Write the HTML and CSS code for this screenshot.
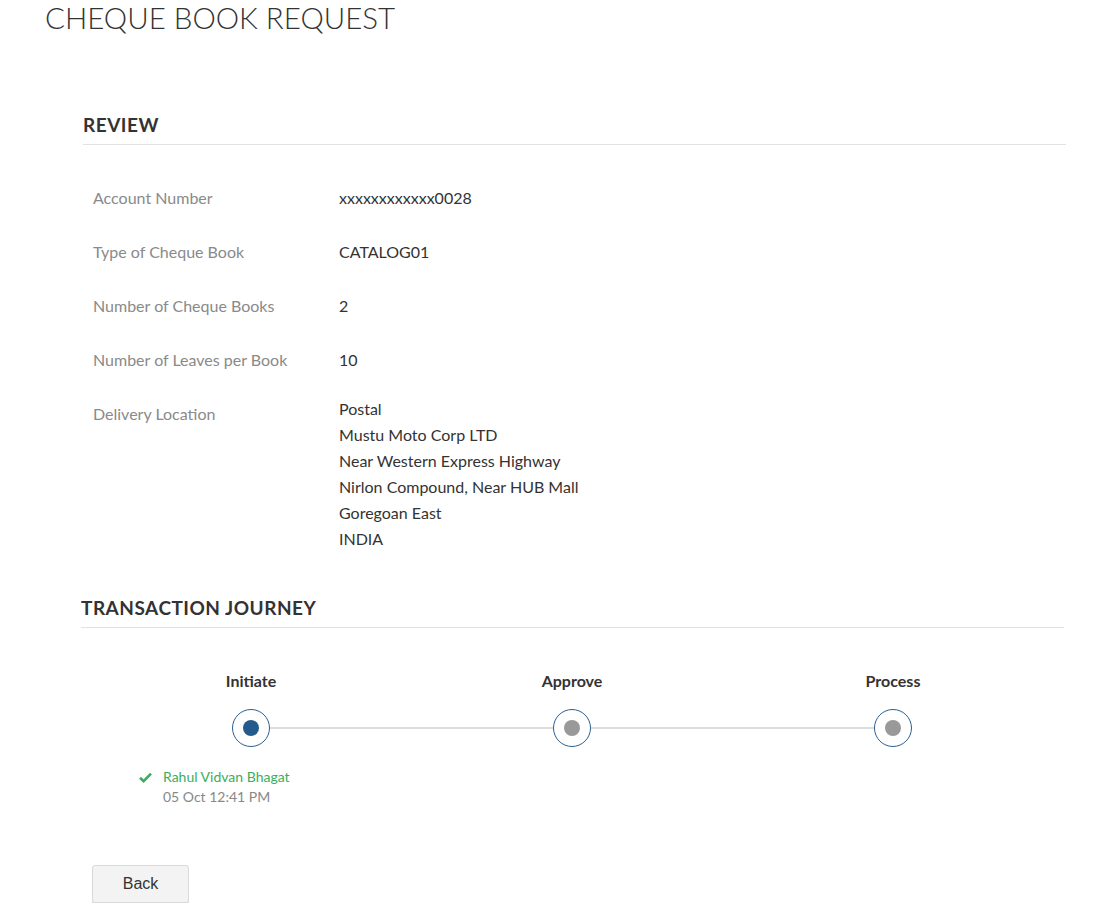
FILE: index.html
```html
<!DOCTYPE html>
<html lang="en">
<head>
<meta charset="utf-8">
<title>Cheque Book Request</title>
<link rel="stylesheet" href="styles.css">
</head>
<body>
<h1 class="page-title">CHEQUE BOOK REQUEST</h1>

<section class="review">
  <h2 class="section-heading">REVIEW</h2>
  <div class="rows">
    <div class="row"><div class="label">Account Number</div><div class="value">xxxxxxxxxxxx0028</div></div>
    <div class="row"><div class="label">Type of Cheque Book</div><div class="value">CATALOG01</div></div>
    <div class="row"><div class="label">Number of Cheque Books</div><div class="value">2</div></div>
    <div class="row"><div class="label">Number of Leaves per Book</div><div class="value">10</div></div>
    <div class="row"><div class="label">Delivery Location</div>
      <div class="value address">
        <div>Postal</div>
        <div>Mustu Moto Corp LTD</div>
        <div>Near Western Express Highway</div>
        <div>Nirlon Compound, Near HUB Mall</div>
        <div>Goregoan East</div>
        <div>INDIA</div>
      </div>
    </div>
  </div>
</section>

<section class="journey">
  <h2 class="section-heading">TRANSACTION JOURNEY</h2>
  <div class="step-labels">
    <div class="step-label">Initiate</div>
    <div class="step-label">Approve</div>
    <div class="step-label">Process</div>
  </div>
  <div class="track">
    <div class="node"><span class="dot dot-active"></span></div>
    <div class="connector"></div>
    <div class="node"><span class="dot"></span></div>
    <div class="connector"></div>
    <div class="node"><span class="dot"></span></div>
  </div>
  <div class="actor">
    <svg class="check" width="13" height="11" viewBox="0 0 13 11"><path d="M1 5.8 L4.6 9.2 L12 1.6" fill="none" stroke="#3aae5b" stroke-width="2.6"/></svg>
    <div class="actor-text">
      <div class="actor-name">Rahul Vidvan Bhagat</div>
      <div class="actor-date">05 Oct 12:41 PM</div>
    </div>
  </div>
</section>

<div class="actions">
  <button class="btn" type="button">Back</button>
</div>
</body>
</html>
```

FILE: styles.css
```css
html, body {
  margin: 0;
  padding: 0;
  background: #fff;
}
body {
  font-family: Lato, "Open Sans", sans-serif;
  color: #333;
}
.page-title {
  margin: 0;
  padding-left: 45px;
  font-size: 29.5px;
  line-height: 36px;
  font-weight: 300;
  letter-spacing: 0;
  color: #333;
}
.section-heading {
  margin: 0;
  font-size: 19px;
  line-height: 24px;
  font-weight: 700;
  letter-spacing: 0.5px;
  color: #333;
  padding-bottom: 7px;
  border-bottom: 1px solid #e2e2e2;
}
.review {
  margin: 77px 48px 0 83px;
}
.rows {
  margin-top: 26px;
}
.row {
  display: flex;
  padding: 14px 0;
  font-size: 16px;
  line-height: 26px;
}
.label {
  width: 246px;
  padding-left: 10px;
  color: #8a8a8a;
}
.value {
  color: #333;
}
.address {
  margin-top: -5px;
}
.journey {
  margin: 30px 50px 0 81px;
}
.step-labels {
  display: flex;
  margin-top: 43px;
  padding-left: 9.5px;
}
.step-label {
  width: 321px;
  text-align: center;
  font-size: 16px;
  line-height: 20px;
  font-weight: 700;
  color: #333;
}
.track {
  display: flex;
  align-items: center;
  margin-top: 18px;
  padding-left: 151px;
}
.node {
  width: 38px;
  height: 38px;
  box-sizing: border-box;
  border: 1px solid #2d5f8f;
  border-radius: 50%;
  background: #fff;
  display: flex;
  align-items: center;
  justify-content: center;
  flex: none;
}
.dot {
  width: 16px;
  height: 16px;
  border-radius: 50%;
  background: #999;
}
.dot-active {
  background: #245b8c;
}
.connector {
  width: 283px;
  height: 2px;
  background: #dcdcdc;
}
.actor {
  display: flex;
  align-items: flex-start;
  gap: 11px;
  margin-top: 20px;
  padding-left: 58px;
  font-size: 14px;
  line-height: 20px;
}
.check {
  margin-top: 5px;
}
.actor-name {
  color: #3aae5b;
}
.actor-date {
  color: #888;
}
.actions {
  margin-top: 58px;
  padding-left: 92px;
}
.btn {
  width: 97px;
  height: 38px;
  box-sizing: border-box;
  background: #f3f3f3;
  border: 1px solid #d9d9d9;
  border-radius: 3px;
  box-shadow: 0 3px 0 #e0e0e0;
  font-family: "Liberation Sans", Arial, sans-serif;
  font-size: 16px;
  color: #333;
  padding: 0;
}
```
